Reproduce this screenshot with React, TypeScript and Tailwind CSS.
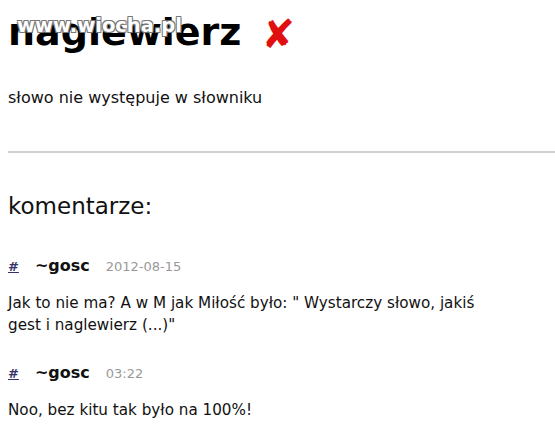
const font = { fontFamily: '"DejaVu Sans", Verdana, sans-serif' };

const comments = [
  {
    author: "~gosc",
    date: "2012-08-15",
    text: 'Jak to nie ma? A w M jak Miłość było: " Wystarczy słowo, jakiś gest i naglewierz (...)"',
  },
  { author: "~gosc", date: "03:22", text: "Noo, bez kitu tak było na 100%!" },
];

function Comment({ author, date, text }: { author: string; date: string; text: string }) {
  return (
    <div className="mb-[27px]">
      <div className="flex items-baseline gap-[16px] leading-[20px]">
        <a href="#" className="text-[13px] font-bold text-[#333366] underline">
          #
        </a>
        <span className="text-[16px] font-bold text-[#111]">{author}</span>
        <span className="text-[13px] text-[#999]">{date}</span>
      </div>
      <p className="mt-[15px] w-[490px] text-[15.2px] leading-[22px] text-[#111]">{text}</p>
    </div>
  );
}

export default function App() {
  return (
    <div className="min-h-screen overflow-hidden bg-white pl-2" style={font}>
      <div className="relative pt-[13px]">
        <h1 className="flex h-[38px] items-center gap-[20px] text-[38px] font-bold leading-[38px] text-black">
          naglewierz
          <span className="mt-[3px] text-[40px] leading-none text-[#e01010]">✘</span>
        </h1>
        <div
          className="absolute left-[9px] top-[14px] text-[19.5px] font-bold leading-[23px] text-white"
          style={{
            textShadow:
              "1px 1px 0 #777, -1px -1px 0 #777, 1px -1px 0 #777, -1px 1px 0 #777",
          }}
        >
          www.wiocha.pl
        </div>
      </div>
      <p className="mt-[37px] text-[16px] leading-[20px] text-[#111]">słowo nie występuje w słowniku</p>
      <hr className="mt-[43px] border-t-2 border-[#cfcfcf]" />
      <h2 className="mt-[39px] text-[23px] leading-[28px] text-[#111]">komentarze:</h2>
      <div className="mt-[36px]">
        {comments.map((c, i) => (
          <Comment key={i} {...c} />
        ))}
      </div>
    </div>
  );
}
